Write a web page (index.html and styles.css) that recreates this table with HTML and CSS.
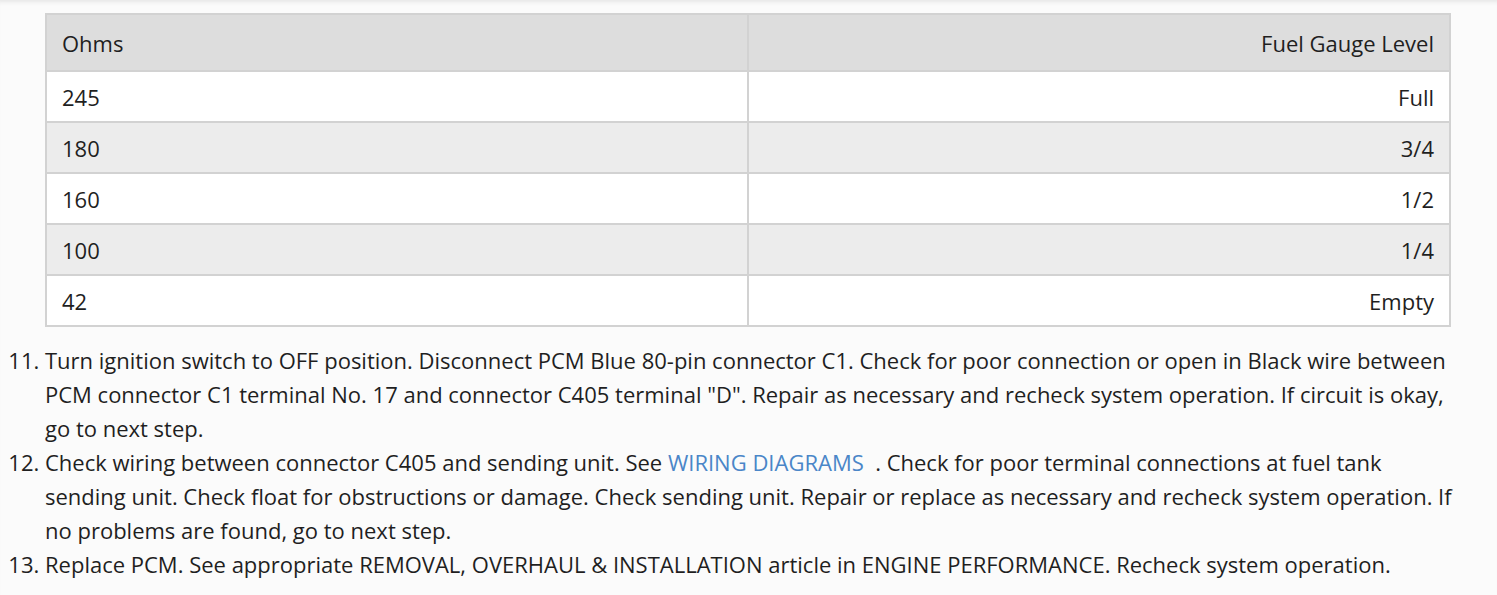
FILE: index.html
```html
<!DOCTYPE html>
<html>
<head>
<meta charset="utf-8">
<link rel="stylesheet" href="styles.css">
</head>
<body>
<div class="page">
  <table class="gauge">
    <thead>
      <tr><th class="left">Ohms</th><th class="right">Fuel Gauge Level</th></tr>
    </thead>
    <tbody>
      <tr><td class="left">245</td><td class="right">Full</td></tr>
      <tr class="alt"><td class="left">180</td><td class="right">3/4</td></tr>
      <tr><td class="left">160</td><td class="right">1/2</td></tr>
      <tr class="alt"><td class="left">100</td><td class="right">1/4</td></tr>
      <tr><td class="left">42</td><td class="right">Empty</td></tr>
    </tbody>
  </table>
  <ol class="steps" start="11">
    <li>Turn ignition switch to OFF position. Disconnect PCM Blue 80-pin connector C1. Check for poor connection or open in Black wire between PCM connector C1 terminal No. 17 and connector C405 terminal "D". Repair as necessary and recheck system operation. If circuit is okay, go to next step.</li>
    <li>Check wiring between connector C405 and sending unit. See <a class="link">WIRING DIAGRAMS</a>&nbsp; . Check for poor terminal connections at fuel tank sending unit. Check float for obstructions or damage. Check sending unit. Repair or replace as necessary and recheck system operation. If no problems are found, go to next step.</li>
    <li>Replace PCM. See appropriate REMOVAL, OVERHAUL &amp; INSTALLATION article in ENGINE PERFORMANCE. Recheck system operation.</li>
  </ol>
</div>
</body>
</html>
```

FILE: styles.css
```css
html, body {
  margin: 0;
  padding: 0;
  background: #fbfbfb;
}
body {
  font-family: "Open Sans", "Noto Sans", sans-serif;
  color: #1f1f1f;
  font-size: 22px;
  box-shadow: inset 0 5px 4px -3px #e6e6e6;
  min-height: 595px;
}
.page {
  padding: 13px 0 0 45px;
  width: 1406px;
}
.gauge {
  width: 1406px;
  border-collapse: collapse;
  background: #fff;
}
.gauge th, .gauge td {
  border: 2px solid #d2d2d2;
  padding: 0 15px;
  font-weight: normal;
  font-size: 22px;
}
.gauge th {
  height: 55px;
  background: #dddddd;
}
.gauge td {
  height: 49px;
}
.gauge .alt td {
  background: #ececec;
}
.left { text-align: left; width: 50%; }
.right { text-align: right; }
.steps {
  margin: 16px 0 0 -45px;
  padding: 0 0 0 45px;
  line-height: 34px;
  width: 1408px;
}
.link {
  color: #4a86c8;
}
```
